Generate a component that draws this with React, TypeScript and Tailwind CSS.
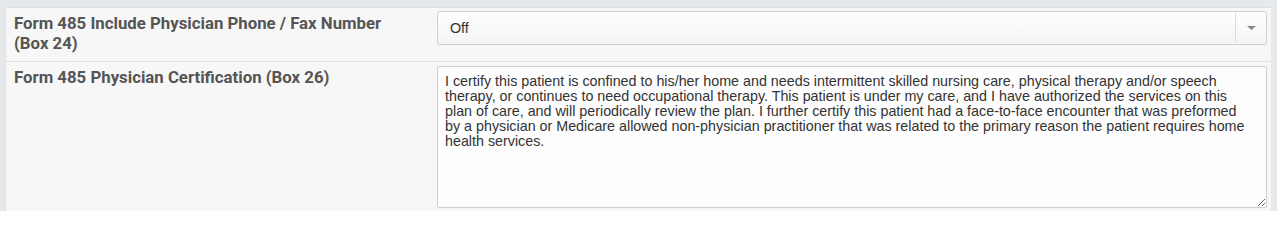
import React from "react";

const certText =
  "I certify this patient is confined to his/her home and needs intermittent skilled nursing care, physical therapy and/or speech\ntherapy, or continues to need occupational therapy. This patient is under my care, and I have authorized the services on this\nplan of care, and will periodically review the plan. I further certify this patient had a face-to-face encounter that was preformed\nby a physician or Medicare allowed non-physician practitioner that was related to the primary reason the patient requires home\nhealth services.";

export default function App() {
  return (
    <div className="w-[1277px] h-[211px] overflow-hidden bg-[#e6e9ec] pt-[7px] pl-[5px] pr-[6px]">
      <div className="h-full bg-[#f7f7f7] border-l border-t border-[#dde1e4]">
        <div className="flex h-[54px] border-b border-[#e0e0e0]">
          <div
            className="w-[431px] shrink-0 pl-[8px] pt-[5px] text-[16.8px] leading-[20px] font-bold text-[#555]"
            style={{ fontFamily: "Roboto, 'Liberation Sans', sans-serif" }}
          >
            Form 485 Include Physician Phone / Fax Number
            <br />
            (Box 24)
          </div>
          <div className="flex-1 pt-[3px] pr-[4px]">
            <div className="flex h-[34px] items-center rounded-[3px] border border-[#cfcfcf] bg-gradient-to-b from-[#ffffff] to-[#f4f4f4]">
              <span
                className="flex-1 pl-[12px] pt-[2px] text-[14.3px] text-[#333]"
                style={{ fontFamily: "'Liberation Sans', Arial, sans-serif" }}
              >
                Off
              </span>
              <div className="flex h-[30px] w-[31px] items-center justify-center border-l border-[#dcdcdc]">
                <svg width="9" height="4" viewBox="0 0 9 4">
                  <path d="M0 0 L9 0 L4.5 4 Z" fill="#888" />
                </svg>
              </div>
            </div>
          </div>
        </div>
        <div className="flex">
          <div
            className="w-[431px] shrink-0 pl-[8px] pt-[5px] text-[16.8px] leading-[20px] font-bold text-[#555]"
            style={{ fontFamily: "Roboto, 'Liberation Sans', sans-serif" }}
          >
            Form 485 Physician Certification (Box 26)
          </div>
          <div className="flex-1 pt-[4px] pr-[4px]">
            <textarea
              readOnly
              value={certText}
              wrap="off"
              className="block h-[142px] w-full resize-y overflow-hidden rounded-[2px] border border-[#cfcfcf] bg-[#fdfdfd] px-[7px] pt-[7px] text-[14.3px] leading-[15px] text-[#333] outline-none"
              style={{ fontFamily: "'Liberation Sans', Arial, sans-serif" }}
            />
          </div>
        </div>
      </div>
    </div>
  );
}
